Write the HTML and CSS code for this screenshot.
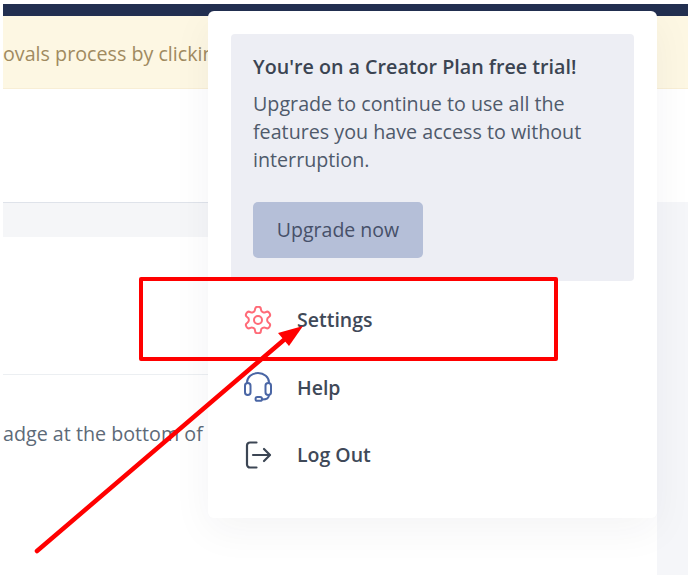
FILE: index.html
```html
<!DOCTYPE html>
<html lang="en">

<head>
    <meta charset="UTF-8">
    <meta name="viewport" content="width=device-width, initial-scale=1.0">
    <title>Settings menu</title>
    <link rel="stylesheet" href="styles.css">
</head>

<body>
    <div class="page">
        <div class="topbar"></div>
        <div class="banner">ovals process by clicking</div>

        <div class="content">
            <div class="content__main">
                <div class="content__intro"></div>
                <div class="content__head"></div>
                <div class="content__row"></div>
                <div class="content__row content__row--text">adge at the bottom of</div>
            </div>
            <div class="content__side"></div>
        </div>
    </div>

    <div class="menu">
        <div class="trial">
            <h2 class="trial__title">You're on a Creator Plan free trial!</h2>
            <p class="trial__text">Upgrade to continue to use all the features you have access to without interruption.</p>
            <a class="trial__btn" href="#">Upgrade now</a>
        </div>

        <ul class="menu__list">
            <li class="menu__item">
                <svg class="menu__icon menu__icon--settings" viewBox="1.500 1.500 21 21" fill="none" stroke="currentColor" stroke-width="1.500" stroke-linecap="round" stroke-linejoin="round">
                    <path d="M12.220 2h-.44a2 2 0 0 0-2 2v.18a2 2 0 0 1-1 1.730l-.43.25a2 2 0 0 1-2 0l-.15-.08a2 2 0 0 0-2.730.73l-.22.38a2 2 0 0 0 .73 2.730l.15.1a2 2 0 0 1 1 1.720v.51a2 2 0 0 1-1 1.740l-.15.09a2 2 0 0 0-.73 2.730l.22.38a2 2 0 0 0 2.730.73l.15-.08a2 2 0 0 1 2 0l.43.25a2 2 0 0 1 1 1.730V20a2 2 0 0 0 2 2h.44a2 2 0 0 0 2-2v-.18a2 2 0 0 1 1-1.730l.43-.25a2 2 0 0 1 2 0l.15.08a2 2 0 0 0 2.730-.73l.22-.39a2 2 0 0 0-.73-2.730l-.15-.08a2 2 0 0 1-1-1.740v-.5a2 2 0 0 1 1-1.740l.15-.09a2 2 0 0 0 .73-2.730l-.22-.38a2 2 0 0 0-2.730-.73l-.15.08a2 2 0 0 1-2 0l-.43-.25a2 2 0 0 1-1-1.730V4a2 2 0 0 0-2-2z" />
                    <circle cx="12" cy="12" r="3" />
                </svg>
                Settings
            </li>
            <li class="menu__item">
                <svg class="menu__icon menu__icon--help" viewBox="0 0 28 30" fill="none" stroke="currentColor" stroke-width="2" stroke-linecap="round" stroke-linejoin="round">
                    <path d="M3 11V10.500a11 9.500 0 0 1 22 0V11" />
                    <rect x="1" y="11" width="5.500" height="12" rx="2.750" />
                    <rect x="21.500" y="11" width="5.500" height="12" rx="2.750" />
                    <path d="M25 23c0 3-2.500 4.500-7 4.500" />
                    <rect x="11.500" y="25" width="6.500" height="3.800" rx="1.900" />
                </svg>
                Help
            </li>
            <li class="menu__item">
                <svg class="menu__icon menu__icon--logout" viewBox="0 0 28 28" fill="none" stroke="currentColor" stroke-width="2.200" stroke-linecap="round" stroke-linejoin="round">
                    <path d="M12.500 1.500H6a3 3 0 0 0-3 3v19a3 3 0 0 0 3 3h6.500" />
                    <path d="M9 14h16.500" />
                    <path d="M20 8l6 6-6 6" />
                </svg>
                Log Out
            </li>
        </ul>
    </div>

    <div class="callout"></div>
    <svg class="arrow" viewBox="0 0 688 575" fill="none">
        <path d="M37 551L285 339" stroke="#ff0000" stroke-width="4.500" stroke-linecap="round" />
        <path d="M303 326L278 333L289 346Z" fill="#ff0000" />
    </svg>
</body>

</html>
```

FILE: styles.css
```css
*,
::after,
::before {
    box-sizing: border-box;
}

body {
    margin: 0;
    height: 575px;
    overflow: hidden;
    background: #fff;
    font-family: "Open Sans", sans-serif;
    color: #414b5c;
}

ul {
    margin: 0;
    padding: 0;
    list-style: none;
}

.page {
    height: 575px;
    padding: 4px 0 0 3px;
}

.topbar {
    height: 12px;
    background: #222f50;
}

.banner {
    height: 73px;
    padding-top: 24px;
    border-bottom: 1px solid #f8eed5;
    background: #fdf7e3;
    font-size: 19.7px;
    line-height: 27px;
    color: #a08a60;
    white-space: nowrap;
}

.content {
    display: grid;
    grid-template-columns: 654px 1fr;
    height: 486px;
}

.content__intro {
    height: 113px;
}

.content__head {
    height: 35px;
    border-top: 1px solid #dfe3ea;
    background: #f5f6f8;
}

.content__row {
    height: 138px;
    border-bottom: 1px solid #eceff2;
}

.content__row--text {
    height: auto;
    padding-top: 45px;
    border-bottom: 0;
    font-size: 19.7px;
    line-height: 27px;
    color: #5d6a78;
}

.content__side {
    margin-top: 113px;
    background: #f5f6f9;
}

.menu {
    position: absolute;
    top: 11px;
    left: 208px;
    width: 449px;
    height: 507px;
    padding: 23px;
    border-radius: 6px;
    background: #fff;
    box-shadow: 0 12px 40px rgba(30, 40, 60, .05);
}

.trial {
    height: 247px;
    padding: 19px 22px;
    border-radius: 4px;
    background: #edeef4;
}

.trial__title {
    margin: 0 0 10px;
    font-size: 19.7px;
    font-weight: 600;
    line-height: 27px;
    color: #3b4452;
}

.trial__text {
    margin: 0 0 28px;
    font-size: 19.7px;
    line-height: 28px;
    color: #4f5a6b;
}

.trial__btn {
    display: inline-block;
    width: 170px;
    height: 56px;
    border-radius: 5px;
    background: #b5bfd8;
    font-size: 19.5px;
    line-height: 56px;
    text-align: center;
    text-decoration: none;
    color: #465069;
}

.menu__list {
    padding: 5px 13px 0;
}

.menu__item {
    display: flex;
    align-items: center;
    gap: 25px;
    height: 67.5px;
    font-size: 19.5px;
    font-weight: 600;
    color: #3f4958;
}

.menu__icon {
    flex: none;
    width: 28px;
    height: 28px;
}

.menu__icon--settings {
    color: #ff6b78;
}

.menu__icon--help {
    height: 30px;
    color: #4a66a5;
}

.menu__icon--logout {
    color: #3c4654;
}

.callout {
    position: absolute;
    top: 277px;
    left: 139px;
    width: 419px;
    height: 84px;
    border: 4px solid #ff0000;
    border-radius: 2px;
}

.arrow {
    position: absolute;
    top: 0;
    left: 0;
    width: 688px;
    height: 575px;
}
```
